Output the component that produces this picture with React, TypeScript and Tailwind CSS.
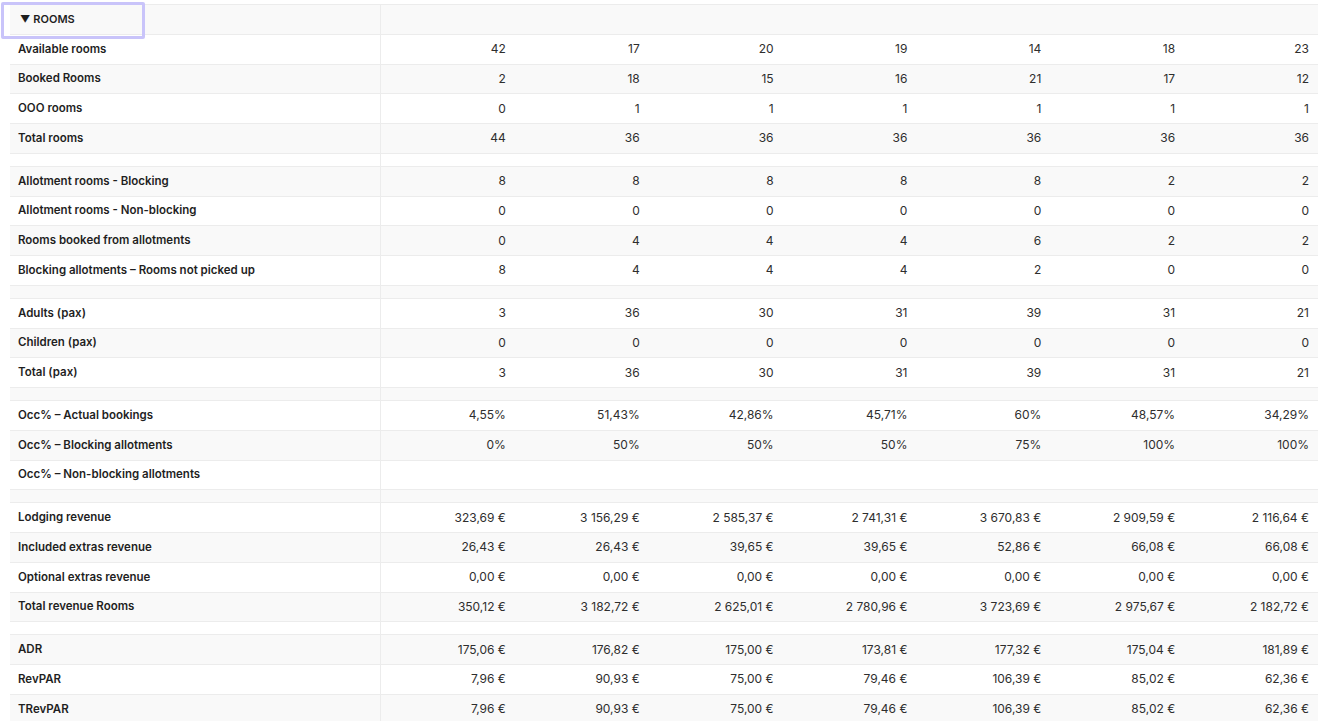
const E = "\u00a0€";

type Row = { label: string; values: string[] } | null;

const eur = (s: string) => s.replace(" ", "\u00a0") + E;

const rows: Row[] = [
  { label: "Available rooms", values: ["42", "17", "20", "19", "14", "18", "23"] },
  { label: "Booked Rooms", values: ["2", "18", "15", "16", "21", "17", "12"] },
  { label: "OOO rooms", values: ["0", "1", "1", "1", "1", "1", "1"] },
  { label: "Total rooms", values: ["44", "36", "36", "36", "36", "36", "36"] },
  null,
  { label: "Allotment rooms - Blocking", values: ["8", "8", "8", "8", "8", "2", "2"] },
  { label: "Allotment rooms - Non-blocking", values: ["0", "0", "0", "0", "0", "0", "0"] },
  { label: "Rooms booked from allotments", values: ["0", "4", "4", "4", "6", "2", "2"] },
  { label: "Blocking allotments – Rooms not picked up", values: ["8", "4", "4", "4", "2", "0", "0"] },
  null,
  { label: "Adults (pax)", values: ["3", "36", "30", "31", "39", "31", "21"] },
  { label: "Children (pax)", values: ["0", "0", "0", "0", "0", "0", "0"] },
  { label: "Total (pax)", values: ["3", "36", "30", "31", "39", "31", "21"] },
  null,
  { label: "Occ% – Actual bookings", values: ["4,55%", "51,43%", "42,86%", "45,71%", "60%", "48,57%", "34,29%"] },
  { label: "Occ% – Blocking allotments", values: ["0%", "50%", "50%", "50%", "75%", "100%", "100%"] },
  { label: "Occ% – Non-blocking allotments", values: ["", "", "", "", "", "", ""] },
  null,
  {
    label: "Lodging revenue",
    values: ["323,69", "3 156,29", "2 585,37", "2 741,31", "3 670,83", "2 909,59", "2 116,64"].map(eur),
  },
  {
    label: "Included extras revenue",
    values: ["26,43", "26,43", "39,65", "39,65", "52,86", "66,08", "66,08"].map(eur),
  },
  {
    label: "Optional extras revenue",
    values: ["0,00", "0,00", "0,00", "0,00", "0,00", "0,00", "0,00"].map(eur),
  },
  {
    label: "Total revenue Rooms",
    values: ["350,12", "3 182,72", "2 625,01", "2 780,96", "3 723,69", "2 975,67", "2 182,72"].map(eur),
  },
  null,
  { label: "ADR", values: ["175,06", "176,82", "175,00", "173,81", "177,32", "175,04", "181,89"].map(eur) },
  { label: "RevPAR", values: ["7,96", "90,93", "75,00", "79,46", "106,39", "85,02", "62,36"].map(eur) },
  { label: "TRevPAR", values: ["7,96", "90,93", "75,00", "79,46", "106,39", "85,02", "62,36"].map(eur) },
];

export default function App() {
  return (
    <div className="min-h-screen bg-white pl-[10px] pt-[4px] font-['Inter',sans-serif]">
      <div className="border-t border-[#ececec]">
        {/* header */}
        <div className="grid h-[29.75px] grid-cols-[371px_repeat(7,1fr)] border-b border-[#ececec] bg-[#f9f9f9]">
          <div className="relative flex items-center border-r border-[#ececec] pl-[10px] text-[11px] font-semibold text-[#1f1f1f]">
            <span className="mr-[3px] text-[10px]">▼</span>
            ROOMS
            <div className="pointer-events-none absolute left-[-9px] top-[-3px] h-[37px] w-[144px] rounded-[2px] border-[3px] border-[#c9c4fa]" />
          </div>
          {Array.from({ length: 7 }).map((_, i) => (
            <div key={i} />
          ))}
        </div>

        {rows.map((row, i) => {
          const bg = (i + 1) % 2 === 0 ? "bg-[#f9f9f9]" : "bg-white";
          if (!row)
            return (
              <div key={i} className={`grid h-[13px] grid-cols-[371px_1fr] border-b border-[#ececec] ${bg}`}>
                <div className="border-r border-[#ececec]" />
                <div />
              </div>
            );
          return (
            <div
              key={i}
              className={`grid h-[29.75px] grid-cols-[371px_repeat(7,1fr)] border-b border-[#ececec] ${bg}`}
            >
              <div className="flex items-center border-r border-[#ececec] pl-[8px] text-[11.5px] font-semibold text-[#1f1f1f]">
                {row.label}
              </div>
              {row.values.map((v, j) => (
                <div key={j} className="flex items-center justify-end pr-[9px] text-[12px] text-[#2e2e2e]">
                  {v}
                </div>
              ))}
            </div>
          );
        })}
      </div>
    </div>
  );
}
